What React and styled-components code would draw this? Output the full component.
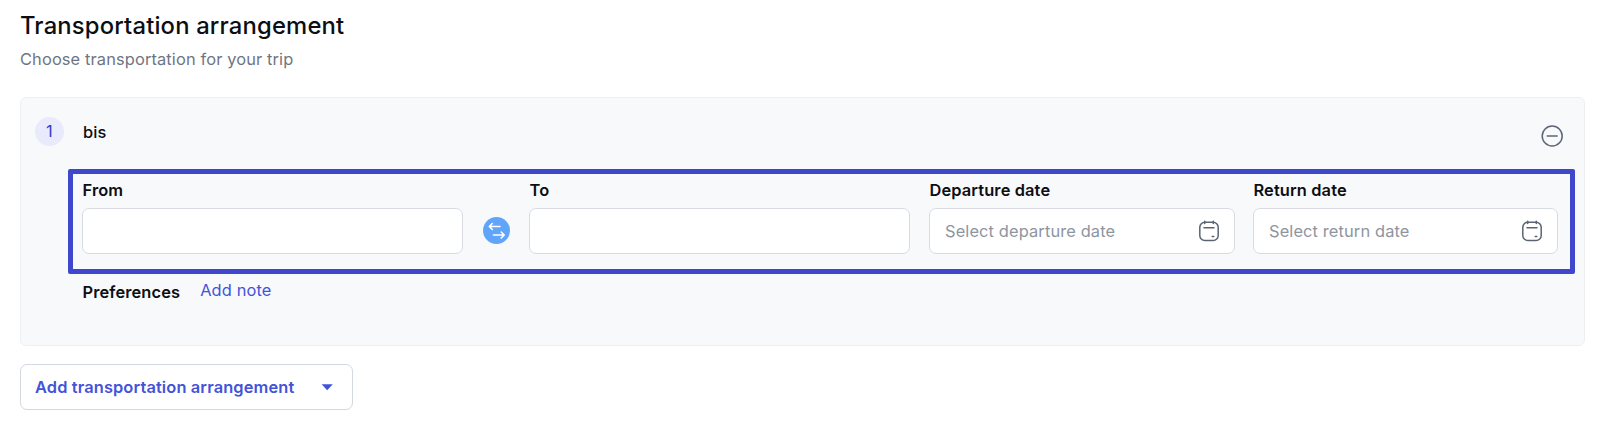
//Importing external library/package
import styled, { createGlobalStyle } from "styled-components";

function App() {
  return (
    <Page>
      <GlobalStyle />
      <Title>Transportation arrangement</Title>
      <Subtitle>Choose transportation for your trip</Subtitle>
      <Card>
        <CardHeader>
          <Step>1</Step>
          <CardTitle>bis</CardTitle>
          <RemoveButton aria-label="Remove">
            <MinusIcon />
          </RemoveButton>
        </CardHeader>
        <Route>
          <Field $width={381}>
            <Label>From</Label>
            <Input />
          </Field>
          <SwapButton aria-label="Swap">
            <SwapIcon />
          </SwapButton>
          <Field $width={381}>
            <Label>To</Label>
            <Input />
          </Field>
          <DateField label="Departure date" placeholder="Select departure date" width={305.5} gap={19} />
          <DateField label="Return date" placeholder="Select return date" width={305} gap={18.5} />
        </Route>
        <Preferences>
          <PreferencesLabel>Preferences</PreferencesLabel>
          <NoteLink>Add note</NoteLink>
        </Preferences>
      </Card>
      <AddButton>
        <span>Add transportation arrangement</span>
        <Caret />
      </AddButton>
    </Page>
  );
}

function DateField({ label, placeholder, width, gap }) {
  return (
    <Field $width={width} $gap={gap}>
      <Label>{label}</Label>
      <DateInput>
        <Placeholder>{placeholder}</Placeholder>
        <CalendarIcon />
      </DateInput>
    </Field>
  );
}

function MinusIcon() {
  return (
    <svg width="22" height="22" viewBox="0 0 22 22" fill="none" stroke="#5d6676" strokeWidth="1.5">
      <circle cx="11.2" cy="11" r="10" />
      <path d="M6.2 11h10" strokeLinecap="round" />
    </svg>
  );
}

function SwapIcon() {
  return (
    <svg
      width="27"
      height="27"
      viewBox="0 0 27 27"
      fill="none"
      stroke="#fff"
      strokeWidth="1.6"
      strokeLinecap="round"
      strokeLinejoin="round"
    >
      <path d="M17 9.5H6.5M9.3 6.5l-3 3 3 3" />
      <path d="M10.5 18H21M18.2 15l3 3-3 3" />
    </svg>
  );
}

function CalendarIcon() {
  return (
    <svg
      width="20"
      height="22"
      viewBox="0 0 20 22"
      fill="none"
      stroke="#5b6472"
      strokeWidth="1.5"
      strokeLinecap="round"
    >
      <rect x="0.8" y="2.2" width="18.4" height="18.2" rx="5" />
      <path d="M5.7 1.2v2.2M14.3 1.2v2.2M5 7.8h10M13.2 16.5h1.6" />
    </svg>
  );
}

function Caret() {
  return (
    <svg width="12" height="7" viewBox="0 0 12 7" fill="#4353d8">
      <path d="M0.6 0.3h11.2L6.2 6.3z" />
    </svg>
  );
}

const GlobalStyle = createGlobalStyle`
  * {
    box-sizing: border-box;
  }
  body {
    margin: 0;
    background: #fff;
    font-family: Inter, "Liberation Sans", sans-serif;
    font-size: 16.4px;
    letter-spacing: 0.13px;
    color: #0c0e14;
  }
  button {
    font: inherit;
    letter-spacing: inherit;
    cursor: pointer;
  }
`;

const Page = styled.main`
  height: 425px;
  padding: 11px 15px 0 20px;
`;

const Title = styled.h1`
  margin: 0;
  font-size: 23.8px;
  line-height: 30px;
  font-weight: 550;
  letter-spacing: 0.18px;
`;

const Subtitle = styled.p`
  margin: 3px 0 0;
  line-height: 30px;
  color: #6e7582;
`;

const Card = styled.section`
  height: 249px;
  margin-top: 23px;
  border: 1px solid #edf0f3;
  border-radius: 6px;
  background: #f8f9fb;
`;

const CardHeader = styled.header`
  display: flex;
  align-items: center;
  height: 71px;
  padding: 0 21px 0 14px;
`;

const Step = styled.div`
  width: 29px;
  height: 29px;
  margin-bottom: 4px;
  border-radius: 50%;
  background: #e9eafc;
  color: #3540c4;
  line-height: 29px;
  text-align: center;
`;

const CardTitle = styled.h2`
  margin: 0 auto 4px 19px;
  font-size: 16.4px;
  line-height: 28px;
  font-weight: 550;
`;

const RemoveButton = styled.button`
  display: flex;
  margin-top: 4px;
  padding: 0;
  border: 0;
  background: none;
`;

const Route = styled.div`
  display: flex;
  align-items: flex-end;
  width: 1507px;
  height: 105px;
  margin-left: 47px;
  padding: 0 0 15px 9px;
  border: 5px solid #3f47cc;
  border-radius: 2px;
`;

const Field = styled.div`
  flex: none;
  width: ${(props) => props.$width}px;
  margin-left: ${(props) => props.$gap || 0}px;
`;

const Label = styled.label`
  display: block;
  margin: 0 0 8px 0.5px;
  line-height: 20px;
  font-weight: 600;
`;

const Input = styled.input`
  display: block;
  width: 100%;
  height: 46px;
  border: 1px solid #d8dce2;
  border-radius: 7px;
  background: #fff;
`;

const DateInput = styled.div`
  display: flex;
  align-items: center;
  justify-content: space-between;
  height: 46px;
  padding: 0 15px;
  border: 1px solid #d8dce2;
  border-radius: 7px;
  background: #fff;
`;

const Placeholder = styled.span`
  color: #8d95a1;
`;

const SwapButton = styled.button`
  display: flex;
  width: 27px;
  height: 27px;
  margin: 0 19px 10px 20px;
  padding: 0;
  border: 0;
  border-radius: 50%;
  background: #60a5fa;
`;

const Preferences = styled.div`
  display: flex;
  margin: 4px 0 0 61.5px;
`;

const PreferencesLabel = styled.span`
  margin-top: 2px;
  line-height: 24px;
  font-weight: 600;
`;

const NoteLink = styled.a`
  margin-left: 20px;
  line-height: 24px;
  color: #4353d8;
`;

const AddButton = styled.button`
  display: flex;
  align-items: center;
  justify-content: space-between;
  width: 333px;
  height: 46px;
  margin-top: 18px;
  padding: 0 19px 0 14px;
  border: 1px solid #d4d8e0;
  border-radius: 7px;
  background: #fff;
  color: #4353d8;
  font-weight: 600;
`;

export default App;
